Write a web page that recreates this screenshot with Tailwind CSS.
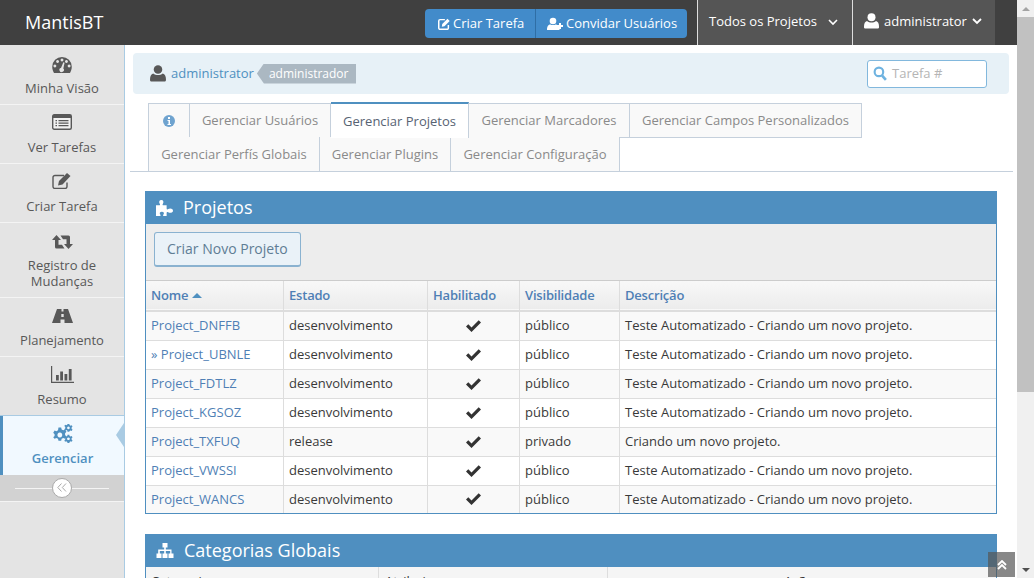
<!DOCTYPE html>
<html lang="pt-BR">
<head>
  <meta charset="UTF-8" />
  <title>MantisBT</title>
  <script src="https://cdn.jsdelivr.net/npm/@tailwindcss/browser@4"></script>
</head>
<body class="h-[578px] w-[1034px] overflow-hidden bg-white font-['Open_Sans',sans-serif] text-[13px] text-[#393939]">
<div class="flex h-[578px]">
  <div class="w-[1017px] h-[578px] overflow-hidden flex flex-col relative">

    <!-- navbar -->
    <header class="h-[45px] shrink-0 bg-[#404040] flex items-stretch text-white">
      <div class="text-[18px] leading-[45px] pl-[25px]">MantisBT</div>
      <div class="ml-auto flex items-center">
        <div class="flex h-[29px] mt-[2px] rounded-[4px] bg-[#428bca] text-[13px]">
          <a class="w-[111px] flex items-center gap-[2px] pl-[12px] border-r border-[#2f6ea5]">
            <svg class="w-[14px] h-[14px]" viewBox="0 0 16 16" fill="none" stroke="white" stroke-width="1.7"><path d="M13 9v3.5a1.5 1.5 0 0 1-1.5 1.5h-8A1.5 1.5 0 0 1 2 12.500v-8A1.500 1.500 0 0 1 3.500 3H9"/><path fill="white" stroke="none" d="M6 8l6-6 2.500 2.500-6 6L5.500 11z"/></svg>
            Criar Tarefa</a>
          <a class="w-[151px] flex items-center gap-[3px] pl-[11px]">
            <svg class="w-[16px] h-[14px]" viewBox="0 0 16 14" fill="white"><circle cx="6" cy="4" r="3.300"/><path d="M0 13c0-4 1.500-5.500 3.500-5.500 1 .8 4 .8 5 0 1 0 1.500.4 2 1V10h2v3z"/><path d="M12 6h2v2h2v2h-2v2h-2v-2h-2V8h2z"/></svg>
            Convidar Usuários</a>
        </div>
        <a class="ml-[10px] h-[45px] w-[155px] bg-[#555] border-l border-white/80 flex items-center pl-[11px] gap-[11px] whitespace-nowrap">
          <span class="-mt-[1px]">Todos os Projetos</span>
          <svg class="w-[10px] h-[7px]" viewBox="0 0 10 7" fill="none" stroke="white" stroke-width="1.600"><path d="M1 1l4 4 4-4"/></svg>
        </a>
        <a class="h-[45px] w-[143px] bg-[#555] border-l border-white/80 flex items-center pl-[11px] gap-[5px] whitespace-nowrap">
          <svg class="w-[15px] h-[16px] -mt-[3px]" viewBox="0 0 15 16" fill="white"><circle cx="7.500" cy="4.200" r="4"/><path d="M1 15.500c-1 0-1-1-1-2 0-3 1-5 3-5.500 2.500 2 6.500 2 9 0 2 .5 3 2.500 3 5.500 0 1 0 2-1 2z"/></svg>
          <span class="-mt-[1px]">administrator</span>
          <svg class="w-[10px] h-[7px] -mt-[3px]" viewBox="0 0 10 7" fill="none" stroke="white" stroke-width="1.800"><path d="M1 1l4 4 4-4"/></svg>
        </a>
        <div class="w-[22px]"></div>
      </div>
    </header>

    <div class="flex flex-1 min-h-0">
      <!-- sidebar -->
      <aside class="w-[125px] shrink-0 bg-[#e4e4e4] border-r border-[#a9cbe3] text-center text-[#585858] leading-[16px]">
        <a class="block h-[60px] pt-[12px] border-b border-[#f4f4f4]">
          <svg class="mx-auto h-[16px] w-[20px]" viewBox="0 0 22 18" fill="#585858"><path fill-rule="evenodd" d="M11 0a11 11 0 0 1 11 11c0 2.500-.8 5-2 7H2c-1.200-2-2-4.500-2-7A11 11 0 0 1 11 0zM6 3.500a1.600 1.600 0 1 0 .01 0zM11 1.800a1.600 1.600 0 1 0 .01 0zM16 3.500a1.600 1.600 0 1 0 .01 0zM3 8.500a1.600 1.600 0 1 0 .01 0zM19 8.500a1.600 1.600 0 1 0 .01 0zM12.500 6L10 12a2.500 2.500 0 1 0 2.500 .8l1.400-6.400z"/></svg>
          <div class="mt-[7px]">Minha Visão</div>
        </a>
        <a class="block h-[59px] pt-[9px] border-b border-[#f4f4f4]">
          <svg class="mx-auto h-[16px] w-[20px]" viewBox="0 0 20 16"><rect x=".7" y=".7" width="18.600" height="14.600" rx="1.500" fill="#f1f1f1" stroke="#585858" stroke-width="1.400"/><rect x="1" y="1" width="18" height="3" fill="#585858"/><path d="M3.500 6h1.500v1.300H3.500zM3.500 8.500h1.500v1.300H3.500zM3.500 11h1.500v1.300H3.500zM6.500 6H16.500v1.300H6.500zM6.500 8.500H16.500v1.300H6.500zM6.500 11H16.500v1.300H6.500z" fill="#585858"/></svg>
          <div class="mt-[9px]">Ver Tarefas</div>
        </a>
        <a class="block h-[59px] pt-[9px] border-b border-[#f4f4f4]">
          <svg class="mx-auto h-[16px] w-[20px]" viewBox="0 0 20 16" fill="none" stroke="#585858" stroke-width="1.400"><path d="M15 9.500V13.500a2 2 0 0 1-2 2H3a2 2 0 0 1-2-2V4.500a2 2 0 0 1 2-2h9"/><path fill="#585858" stroke="none" d="M7 8L15 0l3.500 3-8 8.500L6 12.500z"/></svg>
          <div class="mt-[9px]">Criar Tarefa</div>
        </a>
        <a class="block h-[75px] pt-[12px] border-b border-[#f4f4f4]">
          <svg class="mx-auto h-[14px] w-[21px]" viewBox="0 0 21 14" fill="#585858"><path d="M4.500 0L9 5H6.500V9.800H10L12.500 13.500H4.500A1.500 1.500 0 0 1 3 12V5H0zM16.500 14L12 9H14.500V4.200H11L8.500 .5H16.500A1.500 1.500 0 0 1 18 2V9H21z"/></svg>
          <div class="mt-[8px]">Registro de<br>Mudanças</div>
        </a>
        <a class="block h-[59px] pt-[11px] border-b border-[#f4f4f4]">
          <svg class="mx-auto h-[14px] w-[21px]" viewBox="0 0 21 14" fill="#585858"><path fill-rule="evenodd" d="M5 0h4.500v2.500h2V0H16l5 14h-8.500v-3.500h-4V14H0zM9.300 5h2.400v3H9.300z"/></svg>
          <div class="mt-[9px]">Planejamento</div>
        </a>
        <a class="block h-[59px] pt-[9px] border-b border-[#a9cbe3]">
          <svg class="mx-auto h-[17px] w-[23px]" viewBox="0 0 23 17" fill="#585858"><path d="M0 0h1.200v15.800H23V17H0zM5 9h2.800v5.500H5zM9.200 5.500H12v9H9.200zM13.500 8h2.800v6.500h-2.800zM17.800 3h2.800v11.500h-2.800z"/></svg>
          <div class="mt-[8px]">Resumo</div>
        </a>
        <a class="relative block h-[59px] pt-[8px] bg-[#f1f9ff] border-l-[3px] border-[#4f90c0] text-[#4f90c0] font-semibold">
          <svg class="mx-auto h-[19px] w-[22px] -translate-x-[1px]" viewBox="0 0 22 21" fill="#4f90c0"><path fill-rule="evenodd" d="M6 4h3l.5 2 1.800 1 2-.8 1.500 2.500-1.500 1.500v2l1.500 1.500-1.500 2.500-2-.8-1.800 1-.5 2H6l-.5-2-1.800-1-2 .8L.2 14.700l1.500-1.500v-2L.2 9.700l1.500-2.500 2 .8 1.800-1zM7.500 9.500a2.700 2.700 0 1 0 .01 0z"/><path fill-rule="evenodd" d="M16 0h2l.3 1.200 1.200.6 1.200-.5.8 1.500-1 1v1.400l1 1-.8 1.500-1.200-.5-1.200.6L18 8.500h-2l-.3-1.200-1.200-.6-1.200.5-.8-1.500 1-1V3.300l-1-1 .8-1.500 1.200.5 1.200-.6zM17 2.800a1.500 1.500 0 1 0 .01 0z"/><path fill-rule="evenodd" d="M16 12h2l.3 1.200 1.200.6 1.200-.5.8 1.500-1 1v1.400l1 1-.8 1.500-1.200-.5-1.200.6-.3 1.200h-2l-.3-1.200-1.200-.6-1.200.5-.8-1.500 1-1v-1.400l-1-1 .8-1.500 1.200.5 1.200-.6zM17 14.800a1.500 1.500 0 1 0 .01 0z"/></svg>
          <div class="mt-[7px] -translate-x-[1px]">Gerenciar</div>
          <span class="absolute right-0 top-[7px] border-y-[12px] border-r-[8px] border-y-transparent border-r-[#a9cbe3]"></span>
        </a>
        <div class="relative h-[27px] bg-[#d2d2d2] border-b border-[#f4f4f4] flex items-center justify-center">
          <div class="absolute left-[15px] right-[15px] top-[13px] h-px bg-[#f4f4f4]"></div>
          <div class="relative -mt-[1px] w-[20px] h-[20px] rounded-full bg-white border border-[#aaa] flex items-center justify-center">
            <svg class="w-[10px] h-[9px]" viewBox="0 0 10 9" fill="none" stroke="#aaa" stroke-width="1"><path d="M4.500.5L.8 4.500l3.700 4M9 .5L5.300 4.500 9 8.500"/></svg>
          </div>
        </div>
      </aside>

      <!-- main -->
      <main class="flex-1 min-w-0 pl-[8px] pr-[8px] pt-[8px]">
        <div class="h-[41px] w-[876px] rounded-[4px] bg-[#e7f1f7] flex items-center pl-[17px]">
          <svg class="w-[16px] h-[17px]" viewBox="0 0 15 16" fill="#585858"><circle cx="7.500" cy="4.200" r="4"/><path d="M1 15.500c-1 0-1-1-1-2 0-3 1-5 3-5.500 2.500 2 6.500 2 9 0 2 .5 3 2.500 3 5.500 0 1 0 2-1 2z"/></svg>
          <a class="ml-[5px] text-[#4f90c0]">administrator</a>
          <span class="ml-[3px] h-[20px] relative bg-[#abb8c2] text-white text-[12px] leading-[20px] pl-[12px] pr-[8px] [clip-path:polygon(7px_0,100%_0,100%_100%,7px_100%,0_50%)]">administrador</span>
          <div class="ml-auto mr-[22px] w-[120px] h-[28px] bg-white border border-[#82b8dd] rounded-[3px] flex items-center pl-[5px] gap-[5px] text-[#b5b5b5]">
            <svg class="w-[14px] h-[15px]" viewBox="0 0 13 14" fill="none" stroke="#6fb3e0" stroke-width="2"><circle cx="5.500" cy="5.500" r="4"/><path d="M8.500 9l3.500 4" stroke-width="2.500"/></svg>
            <span>Tarefa #</span>
          </div>
        </div>

        <!-- tabs -->
        <div class="mt-[9px] -ml-[3px] w-[883px] border-b border-[#c5d0dc] pl-[18px] h-[69px] text-[#8a8a8a] text-center">
          <div class="flex h-[35px] -mb-[1px]">
            <a class="w-[42px] h-[35px] bg-[#f9f9f9] border border-[#c5d0dc] flex items-center justify-center">
              <svg class="w-[12px] h-[12px]" viewBox="0 0 12 12"><circle cx="6" cy="6" r="6" fill="#6fa3cf"/><path d="M5 2h2v2H5zM4.500 5H7v4h1v1H4.500V9h1V6h-1z" fill="#fff"/></svg>
            </a>
            <a class="w-[141px] h-[35px] leading-[33px] bg-[#f9f9f9] border-y border-r border-[#c5d0dc]">Gerenciar Usuários</a>
            <a class="w-[138px] relative z-10 h-[36px] -mt-[1px] leading-[35px] bg-white border-r border-[#c5d0dc] border-t-2 border-t-[#4f90c0] text-[#576373]">Gerenciar Projetos</a>
            <a class="w-[161px] h-[35px] leading-[33px] bg-[#f9f9f9] border-y border-r border-[#c5d0dc]">Gerenciar Marcadores</a>
            <a class="w-[232px] h-[35px] leading-[33px] bg-[#f9f9f9] border-y border-r border-[#c5d0dc]">Gerenciar Campos Personalizados</a>
          </div>
          <div class="flex h-[34px]">
            <a class="w-[172px] h-[34px] leading-[35px] bg-[#f9f9f9] border-x border-[#c5d0dc]">Gerenciar Perfís Globais</a>
            <a class="w-[131px] h-[34px] leading-[35px] bg-[#f9f9f9] border-r border-[#c5d0dc]">Gerenciar Plugins</a>
            <a class="w-[169px] h-[34px] leading-[35px] bg-[#f9f9f9] border-r border-[#c5d0dc]">Gerenciar Configuração</a>
          </div>
        </div>

        <!-- projetos -->
        <section class="mt-[19px] ml-[12px] w-[852px] border border-t-0 border-[#4f8fc0]">
          <h4 class="h-[33px] -mx-[1px] bg-[#4f8fc0] text-white text-[18px] leading-[33px] pl-[11px] flex items-center gap-[10px]">
            <svg class="w-[17px] h-[16px]" viewBox="2 0 16 15" fill="white"><path d="M2 5h3c1 0 1-1 .5-1.500C4.500 2 5 0 7 0s2.500 2 1.500 3.500C8 4 8 5 9 5h3v3c0 1 1 1 1.500.5C15 7.500 18 8 18 10s-3 2.500-4.500 1.500C13 11 12 11 12 12v3H9.500c-1 0-1-1-.5-1.500 1-1 .5-2.500-1.500-2.500S5 12.500 6 13.500c.5.5.5 1.500-.5 1.500H2z"/></svg>
            Projetos
          </h4>
          <div class="h-[57px] bg-[#ededed] border-b border-[#ccc] pl-[8px] pt-[8px]">
            <a class="inline-block h-[35px] leading-[32px] px-[12px] text-[14px] text-[#5f7d95] bg-[#eaf2f8] border border-[#8ab2d0] border-b-2 rounded-[3px]">Criar Novo Projeto</a>
          </div>
          <table class="w-[850px] table-fixed border-collapse">
            <colgroup><col class="w-[137px]"><col class="w-[144px]"><col class="w-[92px]"><col class="w-[100px]"><col></colgroup>
            <thead class="text-[#4f7fb5] tracking-[-0.2px]">
              <tr class="h-[30px] bg-linear-to-b from-[#f8f8f8] to-[#ececec] border-b-2 border-[#ddd]">
                <th class="text-left font-semibold pl-[5px] border-r border-[#ddd]">Nome <span class="inline-block align-[2px] ml-[1px] border-x-[5px] border-b-[5px] border-x-transparent border-b-[#4f90c0]"></span></th>
                <th class="text-left font-semibold pl-[5.5px] border-r border-[#ddd]">Estado</th>
                <th class="text-left font-semibold pl-[5.5px] border-r border-[#ddd]">Habilitado</th>
                <th class="text-left font-semibold pl-[5.5px] border-r border-[#ddd]">Visibilidade</th>
                <th class="text-left font-semibold pl-[5.5px]">Descrição</th>
              </tr>
            </thead>
            <tbody>
              <tr class="h-[29px] bg-[#f9f9f9] border-b border-[#ddd]">
                <td class="pl-[5px] border-r border-[#ddd] text-[#4f7fb5]">Project_DNFFB</td><td class="pl-[5.5px] border-r border-[#ddd]">desenvolvimento</td>
                <td class="border-r border-[#ddd]"><svg class="mx-auto w-[15px] h-[12px]" viewBox="0 0 15 12" fill="#333"><path d="M0 6.500L2.300 4.200 5.500 7.400 12.700.2 15 2.500 5.500 12z"/></svg></td>
                <td class="pl-[5.5px] border-r border-[#ddd]">público</td><td class="pl-[5.5px]">Teste Automatizado - Criando um novo projeto.</td>
              </tr>
              <tr class="h-[29px] bg-white border-b border-[#ddd]">
                <td class="pl-[5px] border-r border-[#ddd] text-[#4f7fb5]">» Project_UBNLE</td><td class="pl-[5.5px] border-r border-[#ddd]">desenvolvimento</td>
                <td class="border-r border-[#ddd]"><svg class="mx-auto w-[15px] h-[12px]" viewBox="0 0 15 12" fill="#333"><path d="M0 6.500L2.300 4.200 5.500 7.400 12.700.2 15 2.500 5.500 12z"/></svg></td>
                <td class="pl-[5.5px] border-r border-[#ddd]">público</td><td class="pl-[5.5px]">Teste Automatizado - Criando um novo projeto.</td>
              </tr>
              <tr class="h-[29px] bg-[#f9f9f9] border-b border-[#ddd]">
                <td class="pl-[5px] border-r border-[#ddd] text-[#4f7fb5]">Project_FDTLZ</td><td class="pl-[5.5px] border-r border-[#ddd]">desenvolvimento</td>
                <td class="border-r border-[#ddd]"><svg class="mx-auto w-[15px] h-[12px]" viewBox="0 0 15 12" fill="#333"><path d="M0 6.500L2.300 4.200 5.500 7.400 12.700.2 15 2.500 5.500 12z"/></svg></td>
                <td class="pl-[5.5px] border-r border-[#ddd]">público</td><td class="pl-[5.5px]">Teste Automatizado - Criando um novo projeto.</td>
              </tr>
              <tr class="h-[29px] bg-white border-b border-[#ddd]">
                <td class="pl-[5px] border-r border-[#ddd] text-[#4f7fb5]">Project_KGSOZ</td><td class="pl-[5.5px] border-r border-[#ddd]">desenvolvimento</td>
                <td class="border-r border-[#ddd]"><svg class="mx-auto w-[15px] h-[12px]" viewBox="0 0 15 12" fill="#333"><path d="M0 6.500L2.300 4.200 5.500 7.400 12.700.2 15 2.500 5.500 12z"/></svg></td>
                <td class="pl-[5.5px] border-r border-[#ddd]">público</td><td class="pl-[5.5px]">Teste Automatizado - Criando um novo projeto.</td>
              </tr>
              <tr class="h-[29px] bg-[#f9f9f9] border-b border-[#ddd]">
                <td class="pl-[5px] border-r border-[#ddd] text-[#4f7fb5]">Project_TXFUQ</td><td class="pl-[5.5px] border-r border-[#ddd]">release</td>
                <td class="border-r border-[#ddd]"><svg class="mx-auto w-[15px] h-[12px]" viewBox="0 0 15 12" fill="#333"><path d="M0 6.500L2.300 4.200 5.500 7.400 12.700.2 15 2.500 5.500 12z"/></svg></td>
                <td class="pl-[5.5px] border-r border-[#ddd]">privado</td><td class="pl-[5.5px]">Criando um novo projeto.</td>
              </tr>
              <tr class="h-[29px] bg-white border-b border-[#ddd]">
                <td class="pl-[5px] border-r border-[#ddd] text-[#4f7fb5]">Project_VWSSI</td><td class="pl-[5.5px] border-r border-[#ddd]">desenvolvimento</td>
                <td class="border-r border-[#ddd]"><svg class="mx-auto w-[15px] h-[12px]" viewBox="0 0 15 12" fill="#333"><path d="M0 6.500L2.300 4.200 5.500 7.400 12.700.2 15 2.500 5.500 12z"/></svg></td>
                <td class="pl-[5.5px] border-r border-[#ddd]">público</td><td class="pl-[5.5px]">Teste Automatizado - Criando um novo projeto.</td>
              </tr>
              <tr class="h-[28px] bg-[#f9f9f9]">
                <td class="pl-[5px] border-r border-[#ddd] text-[#4f7fb5]">Project_WANCS</td><td class="pl-[5.5px] border-r border-[#ddd]">desenvolvimento</td>
                <td class="border-r border-[#ddd]"><svg class="mx-auto w-[15px] h-[12px]" viewBox="0 0 15 12" fill="#333"><path d="M0 6.500L2.300 4.200 5.500 7.400 12.700.2 15 2.500 5.500 12z"/></svg></td>
                <td class="pl-[5.5px] border-r border-[#ddd]">público</td><td class="pl-[5.5px]">Teste Automatizado - Criando um novo projeto.</td>
              </tr>
            </tbody>
          </table>
        </section>

        <!-- categorias -->
        <section class="mt-[20px] ml-[12px] w-[852px] border border-t-0 border-[#4f8fc0]">
          <h4 class="h-[33px] -mx-[1px] bg-[#4f8fc0] text-white text-[18px] leading-[33px] pl-[11px] flex items-center gap-[10px]">
            <svg class="w-[18px] h-[15px]" viewBox="0 0 18 15" fill="white"><path d="M6.500 0h5v4.500h-1.700V6.500H15.500V10.500H17.500V15h-5v-4.500h1.700V8H9.800v2.500h1.700V15h-5v-4.500h1.700V8H3.800v2.500h1.700V15h-5v-4.500h1.700V6.500H8.200V4.500H6.500z"/></svg>
            Categorias Globais
          </h4>
          <div class="flex h-[30px] bg-[#f5f5f5] text-[#393939] leading-[28px]">
            <div class="w-[233px] pl-[5px] border-r border-[#ddd]">Categoria</div>
            <div class="w-[229px] pl-[6px] border-r border-[#ddd]">Atribuir</div>
            <div class="flex-1 text-center">Ações</div>
          </div>
        </section>
      </main>
    </div>

    <a class="absolute right-[2px] bottom-[1px] w-[27px] h-[25px] bg-[#555]/70 flex items-center justify-center">
      <svg class="w-[10px] h-[10px]" viewBox="0 0 10 10" fill="none" stroke="white" stroke-width="1.800"><path d="M1 5l4-4 4 4M1 9l4-4 4 4"/></svg>
    </a>
  </div>

  <!-- scrollbar -->
  <div class="w-[17px] h-[578px] bg-[#f0f0f0] flex flex-col items-center">
    <div class="h-[17px] flex items-center"><span class="border-x-[4px] border-b-[4px] border-x-transparent border-b-[#a3a3a3]"></span></div>
    <div class="w-[17px] h-[375px] bg-[#c1c1c1]"></div>
    <div class="mt-auto h-[17px] flex items-center"><span class="border-x-[4px] border-t-[4px] border-x-transparent border-t-[#505050]"></span></div>
  </div>
</div>
</body>
</html>
